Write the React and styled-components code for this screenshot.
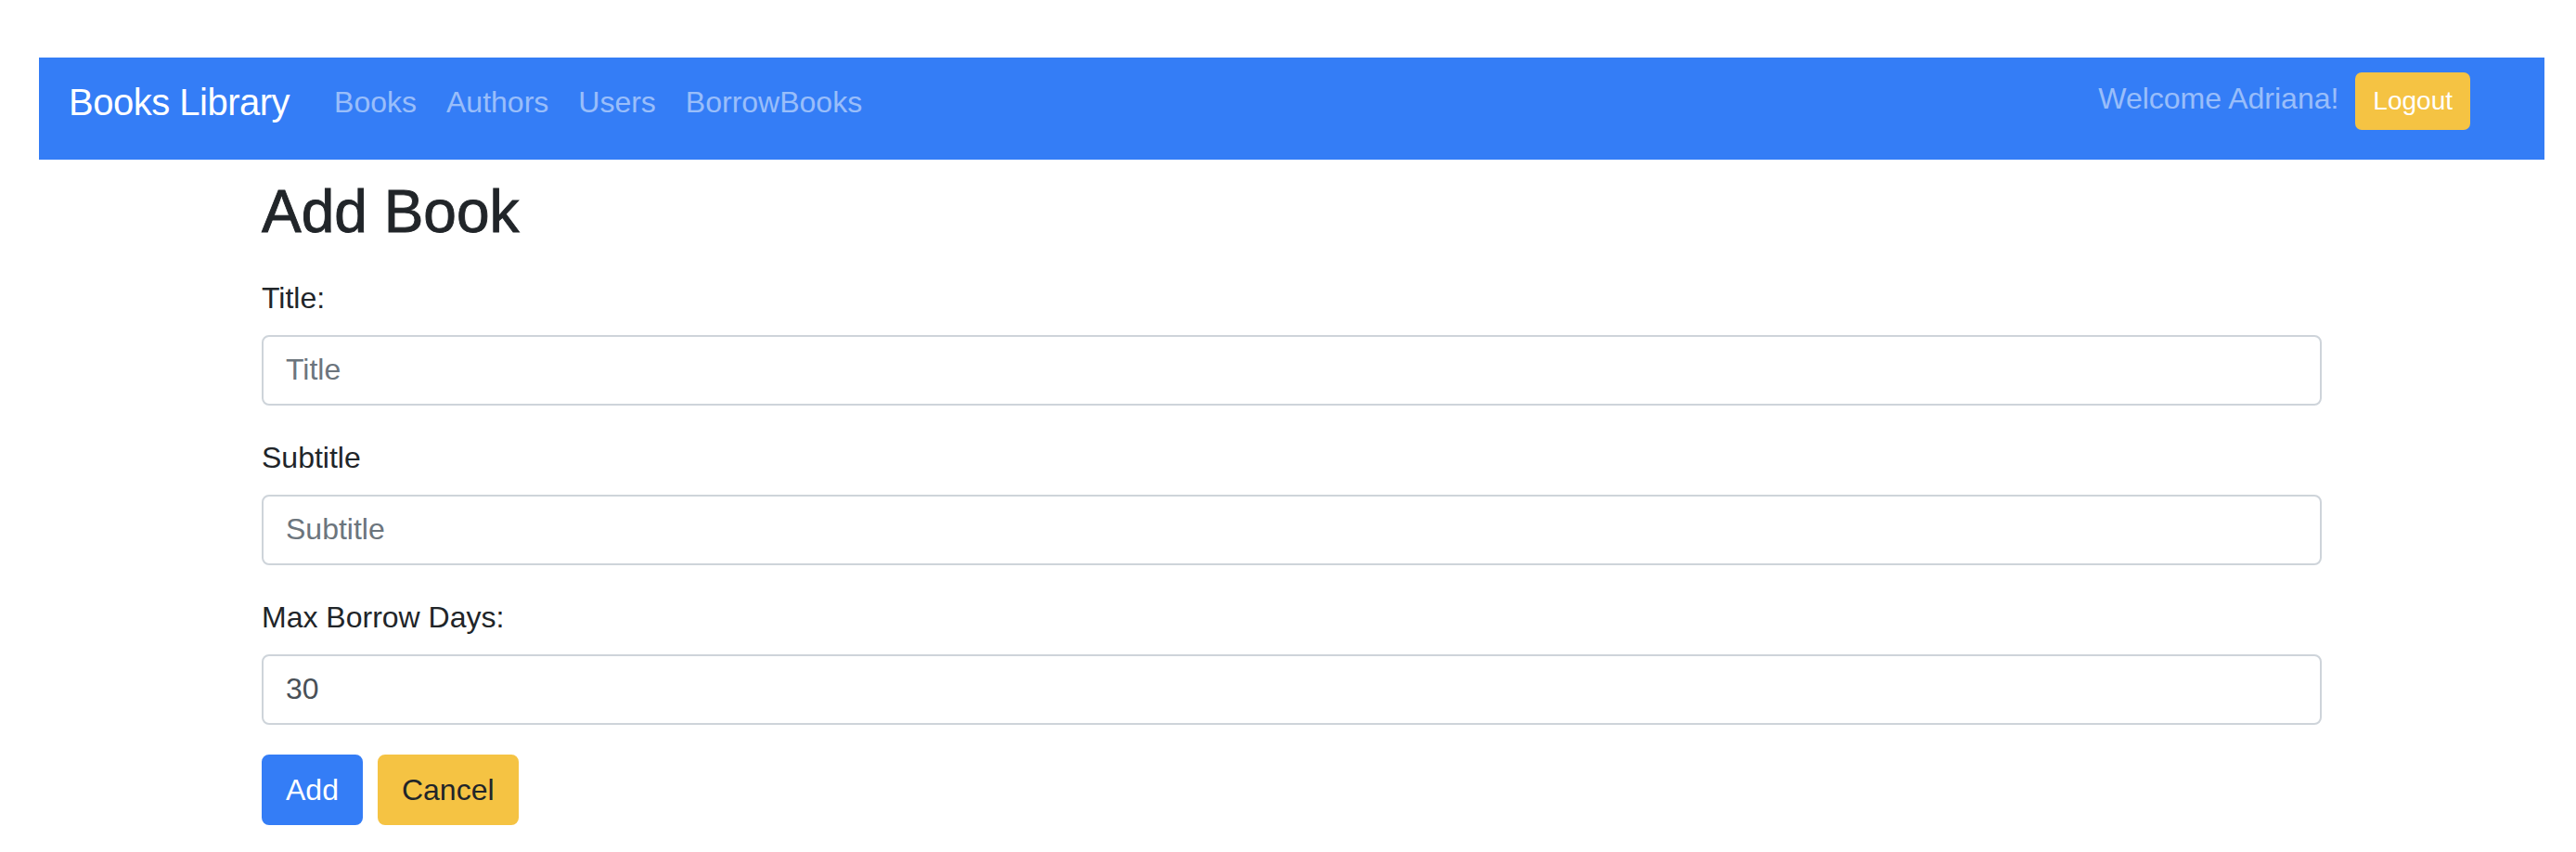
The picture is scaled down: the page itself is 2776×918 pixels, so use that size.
import React from "react";
import styled, { createGlobalStyle } from "styled-components";

const GlobalStyle = createGlobalStyle`
  * {
    box-sizing: border-box;
  }
  body {
    margin: 0;
    background: #ffffff;
    font-family: "Liberation Sans", Arial, sans-serif;
    color: #212529;
  }
`;

const Page = styled.div`
  width: 2700px;
  margin-left: 42px;
  padding-top: 62px;
`;

const Navbar = styled.nav`
  display: flex;
  align-items: flex-start;
  height: 110px;
  padding: 16px 32px 0;
  background: #347df6;
`;

const Brand = styled.a`
  margin: 10px 32px 0 0;
  font-size: 40px;
  line-height: 45px;
  letter-spacing: -0.5px;
  color: #ffffff;
  text-decoration: none;
  white-space: nowrap;
`;

const NavList = styled.ul`
  display: flex;
  margin: 0;
  padding: 0;
  list-style: none;
`;

const NavLink = styled.a`
  display: block;
  padding: 8px 16px 0;
  font-size: 32px;
  line-height: 48px;
  color: rgba(255, 255, 255, 0.5);
  text-decoration: none;
  white-space: nowrap;
`;

const UserArea = styled.div`
  display: flex;
  align-items: flex-start;
  margin-left: auto;
  margin-right: 48px;
`;

const Welcome = styled.span`
  padding-top: 4px;
  margin-right: 18px;
  font-size: 32px;
  line-height: 48px;
  color: rgba(255, 255, 255, 0.5);
  white-space: nowrap;
`;

const Button = styled.button`
  height: ${({ small }) => (small ? "62px" : "76px")};
  padding: ${({ small }) => (small ? "0 17px" : "0 24px")};
  border: 2px solid ${({ variant }) => (variant === "warning" ? "#f5c343" : "#347df6")};
  border-radius: ${({ small }) => (small ? "7px" : "8px")};
  background: ${({ variant }) => (variant === "warning" ? "#f5c343" : "#347df6")};
  color: ${({ variant, small }) => (variant === "warning" && !small ? "#212529" : "#ffffff")};
  font-family: inherit;
  font-size: ${({ small }) => (small ? "28px" : "32px")};
  line-height: 1.5;
  cursor: pointer;
`;

const Main = styled.main`
  max-width: 2220px;
  margin: 0 auto;
`;

const Heading = styled.h2`
  margin: 18px 0 30px;
  font-size: 64px;
  font-weight: 400;
  line-height: 1.2;
  color: #212529;
  -webkit-text-stroke: 0.9px #212529;
`;

const FormGroup = styled.div`
  margin-bottom: 32px;
`;

const Label = styled.label`
  display: block;
  margin-bottom: 16px;
  font-size: 32px;
  line-height: 48px;
  color: #212529;
`;

const Input = styled.input`
  display: block;
  width: 100%;
  height: 76px;
  padding: 0 24px;
  border: 2px solid #ced4da;
  border-radius: 8px;
  background: #ffffff;
  font-family: inherit;
  font-size: 32px;
  color: #495057;
  outline: none;

  &::placeholder {
    color: #6c757d;
  }
`;

const ButtonRow = styled.div`
  display: flex;
  gap: 16px;
`;

const links = ["Books", "Authors", "Users", "BorrowBooks"];

const fields = [
  { id: "title", label: "Title:", placeholder: "Title" },
  { id: "subtitle", label: "Subtitle", placeholder: "Subtitle" },
  { id: "maxDays", label: "Max Borrow Days:", placeholder: "Max Borrow Days", value: "30" },
];

const App = () => {
  return (
    <>
      <GlobalStyle />
      <Page>
        <Navbar>
          <Brand href="#">Books Library</Brand>
          <NavList>
            {links.map((link) => (
              <li key={link}>
                <NavLink href="#">{link}</NavLink>
              </li>
            ))}
          </NavList>
          <UserArea>
            <Welcome>Welcome Adriana!</Welcome>
            <Button small variant="warning">
              Logout
            </Button>
          </UserArea>
        </Navbar>
        <Main>
          <Heading>Add Book</Heading>
          <form onSubmit={(e) => e.preventDefault()}>
            {fields.map((field) => (
              <FormGroup key={field.id}>
                <Label htmlFor={field.id}>{field.label}</Label>
                <Input
                  id={field.id}
                  placeholder={field.placeholder}
                  defaultValue={field.value}
                />
              </FormGroup>
            ))}
            <ButtonRow>
              <Button type="submit">Add</Button>
              <Button type="button" variant="warning">
                Cancel
              </Button>
            </ButtonRow>
          </form>
        </Main>
      </Page>
    </>
  );
};

export default App;
